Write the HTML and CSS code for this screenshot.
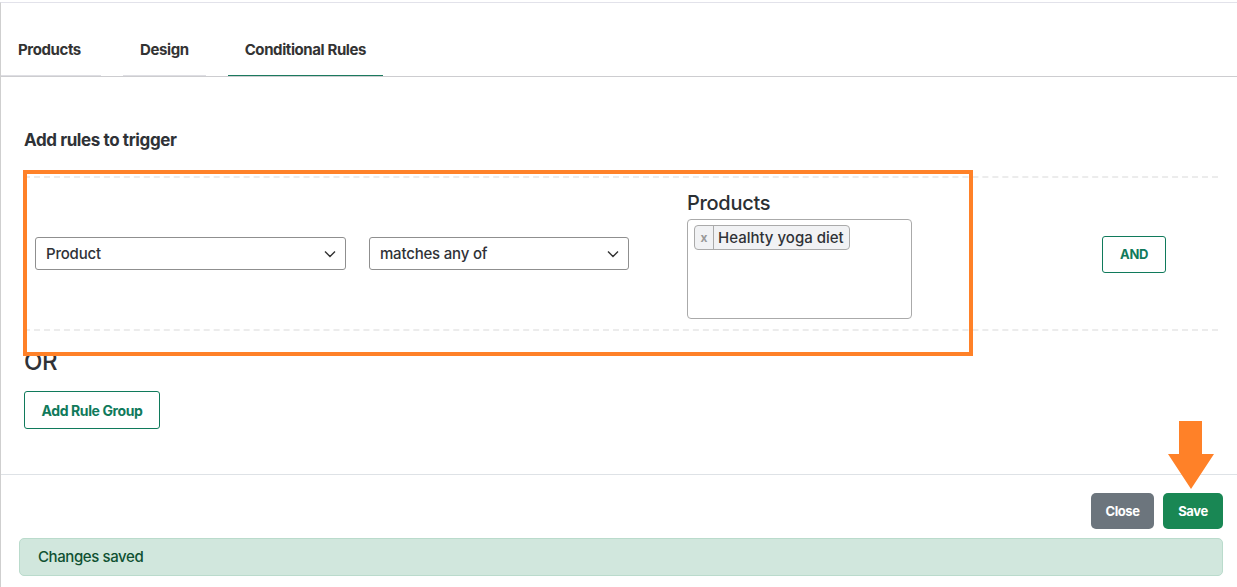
FILE: index.html
```html
<!DOCTYPE html>
<html lang="en">
<head>
  <meta charset="UTF-8">
  <title>Conditional Rules</title>
  <link rel="stylesheet" href="styles.css">
</head>
<body>
  <div class="page">
    <div class="tabs">
      <div class="tab">Products</div>
      <div class="tab">Design</div>
      <div class="tab active">Conditional Rules</div>
    </div>

    <div class="content">
      <h2 class="title">Add rules to trigger</h2>

      <div class="rule-wrap">
        <div class="rule-row">
          <div class="select sel-field">
            <span>Product</span>
            <svg width="12" height="8" viewBox="0 0 12 8"><path d="M1 1.5l5 5 5-5" fill="none" stroke="#333" stroke-width="1.4"/></svg>
          </div>
          <div class="select sel-op">
            <span>matches any of</span>
            <svg width="12" height="8" viewBox="0 0 12 8"><path d="M1 1.5l5 5 5-5" fill="none" stroke="#333" stroke-width="1.4"/></svg>
          </div>
          <div class="values">
            <div class="values-label">Products</div>
            <div class="multi">
              <span class="tag"><span class="tag-x">x</span><span class="tag-text">Healhty yoga diet</span></span>
            </div>
          </div>
          <button class="btn-outline btn-and">AND</button>
        </div>
        <!-- highlight box from the screenshot -->
        <div class="highlight"></div>
      </div>

      <div class="or">OR</div>
      <button class="btn-outline btn-group">Add Rule Group</button>
    </div>

    <div class="footer">
      <div class="actions">
        <button class="btn btn-close">Close</button>
        <button class="btn btn-save">Save</button>
      </div>
      <svg class="arrow" width="46" height="68" viewBox="0 0 46 68"><path d="M11 0h23v33h12L23 68 0 33h11z" fill="#ff8128"/></svg>
      <div class="alert">Changes saved</div>
    </div>
  </div>
</body>
</html>
```

FILE: styles.css
```css
body {
  margin: 0;
  font-family: Inter, "Noto Sans", sans-serif;
  color: #2b2f33;
  background: #fff;
  letter-spacing: -0.4px;
}

.page {
  margin-top: 2px;
  border-top: 1px solid #e2e2ea;
  border-left: 1px solid #cfcfcf;
  height: 584px;
  position: relative;
}

/* tabs */
.tabs {
  display: flex;
  gap: 22px;
  padding-top: 37px;
  border-bottom: 1px solid #cdcdd0;
}
.tab {
  padding: 0 17px 15px;
  line-height: 20px;
  font-size: 15px;
  font-weight: 700;
  color: #333;
  border-bottom: 1px solid #dedee3;
}
.tab:first-child { padding-left: 17px; width: 66px; }
.tab.active { border-bottom-color: #1b7a5e; }

.content {
  padding: 0 19px 0 23px;
}

.title {
  margin: 51px 0 0;
  font-size: 17px;
  line-height: 24px;
  font-weight: 700;
  color: #2f3237;
}

.rule-wrap {
  position: relative;
  margin-top: 24px;
}
.rule-row {
  display: flex;
  align-items: center;
  height: 151px;
  padding-left: 11px;
  border-top: 2px dashed #ececec;
  border-bottom: 2px dashed #ececec;
}

.select {
  box-sizing: border-box;
  height: 33px;
  border: 1px solid #8f8f8f;
  border-radius: 3px;
  display: flex;
  align-items: center;
  justify-content: space-between;
  padding: 0 9px 0 10px;
  font-size: 15px;
  font-weight: 500;
  letter-spacing: -0.2px;
  color: #2f3237;
}
.sel-field { width: 311px; }
.sel-op { width: 260px; margin-left: 23px; }

.values {
  margin-left: 58px;
  margin-top: 1px;
}
.values-label {
  font-size: 20px;
  font-weight: 500;
  line-height: 26px;
  letter-spacing: -0.3px;
  margin-bottom: 3px;
}
.multi {
  box-sizing: border-box;
  width: 225px;
  height: 100px;
  border: 1px solid #aaa;
  border-radius: 4px;
  padding: 5px 6px;
}
.tag {
  display: inline-flex;
  height: 25px;
  box-sizing: border-box;
  border: 1px solid #aaa;
  border-radius: 4px;
  background: #f1f2f4;
  font-size: 15px;
  font-weight: 500;
  line-height: 23px;
  letter-spacing: 0;
}
.tag-x {
  width: 18px;
  text-align: center;
  color: #999;
  font-weight: 700;
  font-size: 12px;
  border-right: 1px solid #aaa;
}
.tag-text {
  padding: 0 5px 0 4px;
  color: #2f3237;
}

.btn-outline {
  font-family: inherit;
  letter-spacing: -0.4px;
  background: #fff;
  border: 1px solid #107a5b;
  border-radius: 3px;
  color: #107a5b;
  font-weight: 700;
  font-size: 13px;
}
.btn-and {
  margin-left: auto;
  margin-right: 52px;
  margin-top: 1px;
  width: 64px;
  height: 37px;
}

.highlight {
  position: absolute;
  left: -1px;
  top: -6px;
  width: 942px;
  height: 178px;
  border: 4px solid #ff8128;
}

.or {
  margin-top: 16px;
  font-size: 24px;
  line-height: 30px;
  font-weight: 500;
  color: #2f3237;
}
.btn-group {
  margin-top: 14px;
  width: 136px;
  height: 38px;
  font-size: 14px;
}

.footer {
  position: absolute;
  left: 0;
  right: 0;
  top: 471px;
  border-top: 1px solid #dee2e6;
}
.actions {
  display: flex;
  justify-content: flex-end;
  gap: 9px;
  padding: 18px 14px 0 0;
}
.btn {
  font-family: inherit;
  letter-spacing: -0.4px;
  height: 36px;
  border: none;
  border-radius: 5px;
  color: #fff;
  font-weight: 700;
  font-size: 13px;
}
.btn-close { width: 63px; background: #6c757d; }
.btn-save { width: 60px; background: #198754; }

.arrow {
  position: absolute;
  left: 1167px;
  top: -54px;
}

.alert {
  margin: 9px 14px 0 18px;
  height: 38px;
  box-sizing: border-box;
  background: #d1e7dd;
  border: 1px solid #badbcc;
  border-radius: 5px;
  color: #0f5132;
  font-size: 15px;
  font-weight: 500;
  line-height: 36px;
  padding-left: 18px;
}
```
